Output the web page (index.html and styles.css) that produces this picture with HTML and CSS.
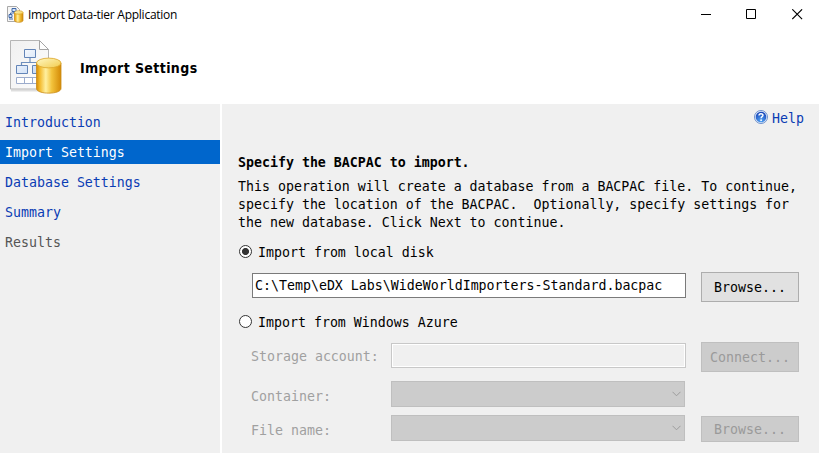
FILE: index.html
```html
<!DOCTYPE html>
<html lang="en">
<head>
<meta charset="utf-8">
<title>Import Data-tier Application</title>
<link rel="stylesheet" href="styles.css">
</head>
<body>
<svg width="0" height="0" class="defs" aria-hidden="true">
  <defs>
    <linearGradient id="gold" x1="0" x2="1" y1="0" y2="0">
      <stop offset="0" stop-color="#d58c08"/><stop offset=".13" stop-color="#f3b829"/>
      <stop offset=".38" stop-color="#fff0a0"/><stop offset=".62" stop-color="#f3c33c"/>
      <stop offset="1" stop-color="#d48a06"/>
    </linearGradient>
    <linearGradient id="lid" x1="0" x2="1" y1="0" y2="1">
      <stop offset="0" stop-color="#fff8c4"/><stop offset="1" stop-color="#f2cb4c"/>
    </linearGradient>
    <linearGradient id="paper" x1="0" x2="1" y1="0" y2="1">
      <stop offset="0" stop-color="#f0f0f0"/><stop offset="1" stop-color="#fdfdfd"/>
    </linearGradient>
    <linearGradient id="box" x1="0" x2="1" y1="0" y2="1">
      <stop offset="0" stop-color="#ffffff"/><stop offset="1" stop-color="#bfd5f3"/>
    </linearGradient>
    <radialGradient id="ball" cx=".5" cy=".85" r=".8">
      <stop offset="0" stop-color="#55a7f5"/><stop offset="1" stop-color="#1644b8"/>
    </radialGradient>
  </defs>
</svg>
<div class="window">
  <header class="titlebar">
    <svg class="app-icon" width="17" height="17" viewBox="0 0 17 17">
      <path d="M.5 .5h9l3 3v12H.5z" fill="#f6f6f6" stroke="#a9a9a9"/>
      <path d="M5 2.500h4v3H5zM2 8.500h3v3H2zM2 13h4" fill="#d4e3f8" stroke="#4169a8"/>
      <path d="M7 5.500v1.500M3.500 8V7H8" fill="none" stroke="#4169a8"/>
      <path d="M7.500 6.500v8c0 2.400 8.500 2.400 8.500 0v-8z" fill="url(#gold)" stroke="#c88a16" stroke-width=".7"/>
      <ellipse cx="11.750" cy="6.500" rx="4.250" ry="1.800" fill="url(#lid)" stroke="#d9a126" stroke-width=".7"/>
    </svg>
    <span class="caption">Import Data-tier Application</span>
    <div class="controls">
      <svg class="minimize" width="10" height="11" viewBox="0 0 10 11"><path d="M0 5.500h10" stroke="#000"/></svg>
      <svg width="11" height="11" viewBox="0 0 11 11"><path d="M.5 .5h9v9h-9z" fill="none" stroke="#000"/></svg>
      <svg width="11" height="11" viewBox="0 0 11 11"><path d="M.3 .3l9.800 9.800M10.100 .3L.3 10.100" stroke="#000" stroke-width="1.100"/></svg>
    </div>
  </header>
  <div class="banner">
    <svg class="page-icon" width="54" height="56" viewBox="0 0 54 56">
      <path d="M1 51.500h27" stroke="#dedede" stroke-width="2"/>
      <path d="M.5 1.500h29l9 9v39.500H.5z" fill="url(#paper)" stroke="#b5b5b5"/>
      <path d="M29.500 1.500v9h9z" fill="#fff" stroke="#a5a5a5"/>
      <path d="M20 19v5M11.500 27v-3.500H31V27" fill="none" stroke="#6e8fbd" stroke-width="1.200"/>
      <g fill="url(#box)" stroke="#6385b8">
        <path d="M14.500 10.500h11v8h-11zM6.500 26.500h11v8h-11zM22.500 26.500h11v8h-11z"/>
      </g>
      <path d="M6.500 38.500h24v6h-24zM14.500 38.500v6M22.500 38.500v6" fill="#fff" stroke="#9caccc"/>
      <path d="M26.500 24v25.500c0 6.200 24.500 6.200 24.500 0V24z" fill="url(#gold)" stroke="#c98a14" stroke-width=".8"/>
      <ellipse cx="38.750" cy="24" rx="12.250" ry="4.900" fill="url(#lid)" stroke="#dca52a" stroke-width=".8"/>
    </svg>
    <h1>Import Settings</h1>
  </div>
  <div class="body">
    <nav class="steps">
      <a>Introduction</a>
      <a class="current">Import Settings</a>
      <a>Database Settings</a>
      <a>Summary</a>
      <a class="pending">Results</a>
    </nav>
    <main class="content">
      <div class="help">
        <svg width="14" height="14" viewBox="0 0 14 14">
          <circle cx="7" cy="7" r="6.500" fill="#e4edfa" stroke="#5f86c8" stroke-width=".9"/>
          <circle cx="7" cy="7" r="5.300" fill="url(#ball)"/>
          <path d="M5 5.600C5 3.100 9 3.200 9 5.300 9 6.700 7.100 6.600 7.100 8.200" fill="none" stroke="#fff" stroke-width="1.400"/>
          <circle cx="7.100" cy="10.200" r=".9" fill="#fff"/>
        </svg>
        <a>Help</a>
      </div>
      <h2>Specify the BACPAC to import.</h2>
      <p class="intro">This operation will create a database from a BACPAC file. To continue,
specify the location of the BACPAC.  Optionally, specify settings for
the new database. Click Next to continue.</p>
      <div class="radio"><span class="dot on"></span>Import from local disk</div>
      <div class="file-row">
        <div class="field path">C:\Temp\eDX Labs\WideWorldImporters-Standard.bacpac</div>
        <div class="button">Browse...</div>
      </div>
      <div class="radio azure-radio"><span class="dot"></span>Import from Windows Azure</div>
      <div class="azure">
        <div class="row storage">
          <span class="label">Storage account:</span>
          <div class="field disabled"></div>
          <div class="button off">Connect...</div>
        </div>
        <div class="row container">
          <span class="label">Container:</span>
          <div class="select"><svg width="9" height="6" viewBox="0 0 9 6"><path d="M.5 .8l4 4 4-4" fill="none" stroke="#9c9c9c"/></svg></div>
        </div>
        <div class="row">
          <span class="label">File name:</span>
          <div class="select"><svg width="9" height="6" viewBox="0 0 9 6"><path d="M.5 .8l4 4 4-4" fill="none" stroke="#9c9c9c"/></svg></div>
          <div class="button off short">Browse...</div>
        </div>
      </div>
    </main>
  </div>
</div>
</body>
</html>
```
FILE: styles.css
```css
* { box-sizing: border-box; }
body {
  margin: 0;
  overflow: hidden;
  background: #fff;
  color: #000;
  font: 13.28px/18px "DejaVu Sans Mono", monospace;
}
svg { display: block; flex: none; }
.defs { position: absolute; }
.window { display: flex; flex-direction: column; width: 819px; height: 453px; }

.titlebar { display: flex; align-items: center; height: 29px; padding: 0 16px 0 7px; }
.caption { margin: 1px 0 0 4px; font: 12px/18px "Open Sans", sans-serif; letter-spacing: -0.25px; }
.controls { display: flex; gap: 35px; margin-left: auto; }

.banner { display: flex; align-items: center; height: 75px; padding-left: 10px; }
.page-icon { margin-top: 1px; }
h1 {
  margin: 3px 0 0 16px;
  font: bold 14px/20px "DejaVu Sans Condensed", "DejaVu Sans", sans-serif;
  letter-spacing: 0.4px;
}

.body { display: flex; flex: 1; gap: 2px; }
.steps {
  display: flex;
  flex-direction: column;
  gap: 6px;
  width: 220px;
  padding-top: 6px;
  background: #f0f0f0;
  color: #0a3cb4;
}
.steps a { height: 24px; padding-left: 5px; line-height: 26px; }
.steps .current { background: #0066cc; color: #fff; }
.steps .pending { color: #555; }

.content { flex: 1; padding: 6px 15px 0 16px; background: #f0f0f0; }
.help { display: flex; justify-content: flex-end; gap: 4px; color: #0a3cb4; }
h2 { margin: 26px 0 0; font-size: 13.28px; line-height: 18px; }
.intro { margin: 6px 0 12px; white-space: pre; }

.radio { display: flex; gap: 6px; height: 18px; padding-left: 1px; }
.dot {
  width: 13px;
  height: 13px;
  margin-top: 1px;
  border: 1px solid #333;
  border-radius: 50%;
  background: #fff;
}
.dot.on { background: radial-gradient(circle, #333 3.1px, #fff 3.9px); }

.file-row { display: flex; gap: 15px; margin: 10px 0 0 14px; }
.field { width: 434px; height: 25px; border: 1px solid #7a7a7a; background: #fff; }
.path { margin-top: 1px; padding-left: 2px; line-height: 23px; white-space: pre; }
.button {
  width: 98px;
  height: 30px;
  border: 1px solid #adadad;
  background: #e1e1e1;
  line-height: 30px;
  text-align: center;
}
.azure-radio { margin-top: 12px; }

.azure { margin: 10px 0 0 13px; color: #a0a0a0; }
.row { display: flex; height: 26px; }
.label { width: 140px; line-height: 32px; }
.storage .label { line-height: 30px; }
.field.disabled {
  width: 295px;
  margin: 1px 15px 0 0;
  border-color: #c8c8c8;
  background: #f0f0f0;
  box-shadow: inset 0 0 0 1px #fff;
}
.button.off { border-color: #bfbfbf; background: #ccc; color: #9a9a9a; }
.button.short { height: 26px; margin-top: 1px; line-height: 26px; }
.select {
  display: flex;
  align-items: center;
  justify-content: flex-end;
  width: 294px;
  height: 26px;
  margin-right: 16px;
  padding-right: 3px;
  border: 1px solid #bfbfbf;
  background: #ccc;
}
.storage { height: 39px; }
.container { margin-bottom: 8px; }
```
